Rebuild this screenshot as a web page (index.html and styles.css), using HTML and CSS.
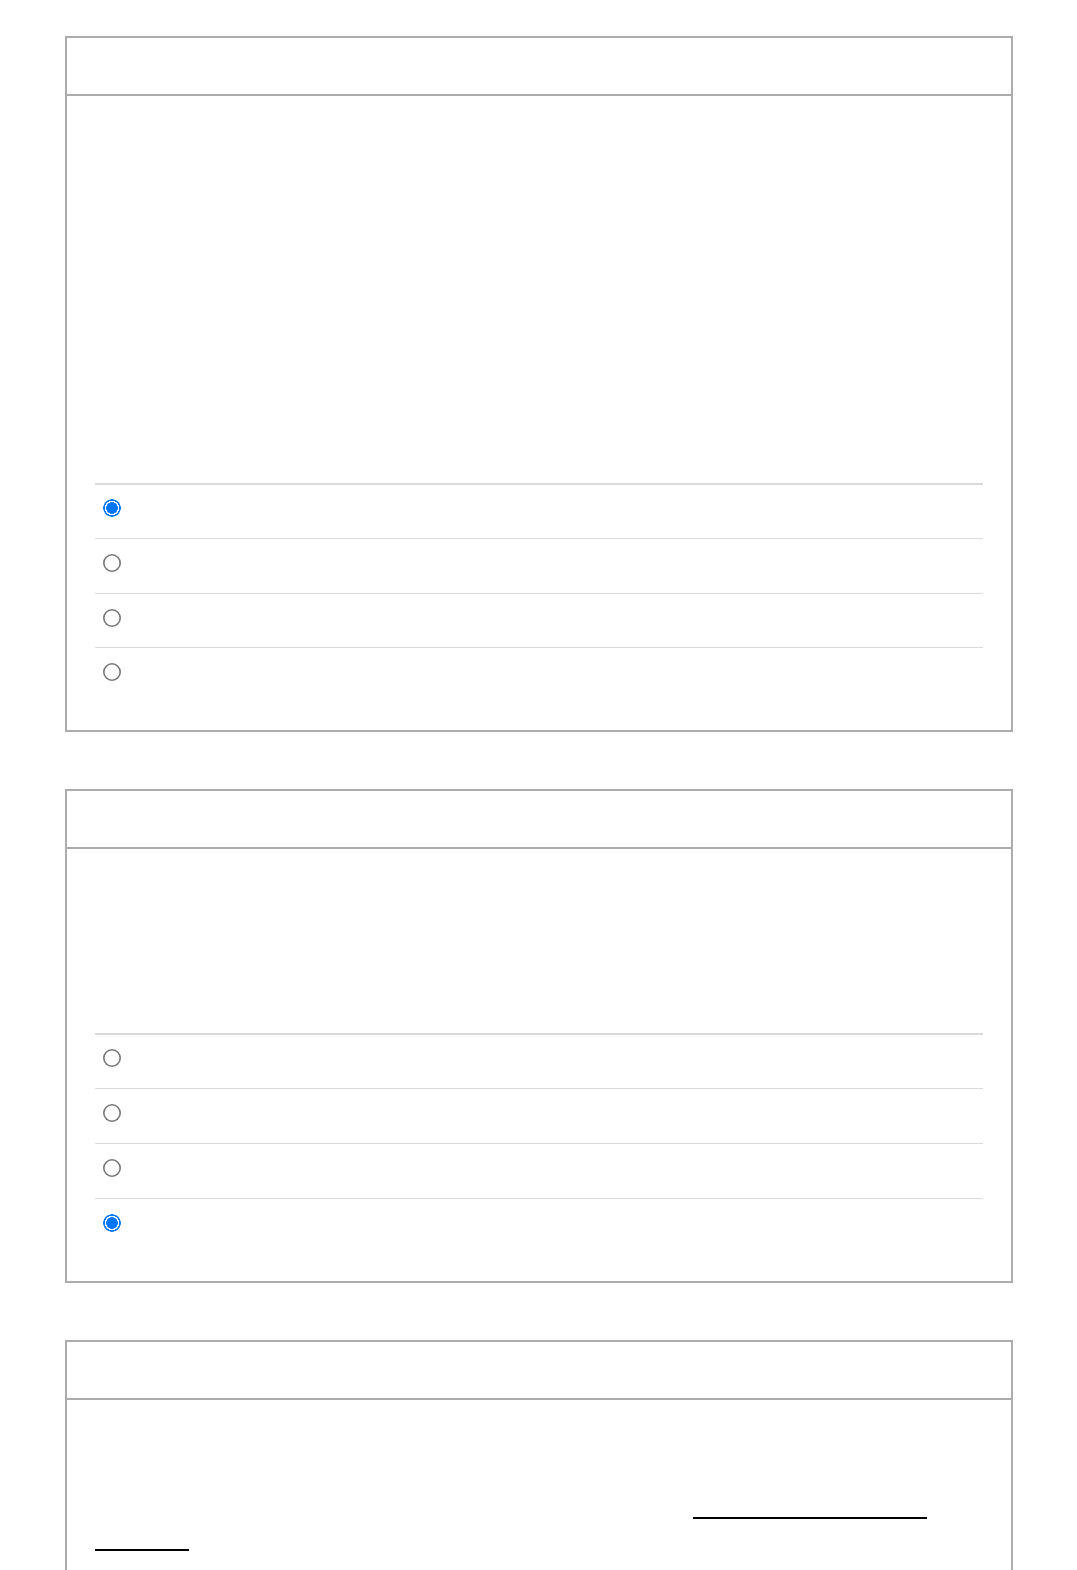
FILE: index.html
```html
<!DOCTYPE html>
<html lang="en">
<head>
<meta charset="utf-8">
<title>Options</title>
<link rel="stylesheet" href="styles.css">
</head>
<body>
<main class="page">
  <section class="card">
    <header class="card-head"></header>
    <div class="card-body">
      <div class="blank blank-lg"></div>
      <ul class="choices">
        <li class="choice"><input type="radio" name="q1" checked aria-label="option 1"></li>
        <li class="choice"><input type="radio" name="q1" aria-label="option 2"></li>
        <li class="choice"><input type="radio" name="q1" aria-label="option 3"></li>
        <li class="choice"><input type="radio" name="q1" aria-label="option 4"></li>
      </ul>
    </div>
  </section>

  <section class="card">
    <header class="card-head"></header>
    <div class="card-body">
      <div class="blank blank-md"></div>
      <ul class="choices">
        <li class="choice"><input type="radio" name="q2" aria-label="option 1"></li>
        <li class="choice"><input type="radio" name="q2" aria-label="option 2"></li>
        <li class="choice"><input type="radio" name="q2" aria-label="option 3"></li>
        <li class="choice"><input type="radio" name="q2" checked aria-label="option 4"></li>
      </ul>
    </div>
  </section>

  <section class="card">
    <header class="card-head"></header>
    <div class="card-body">
      <div class="blank blank-sm"></div>
      <div class="link-line first"><span class="uline uline-a"></span></div>
      <div class="link-line"><span class="uline uline-b"></span></div>
    </div>
  </section>
</main>
</body>
</html>
```

FILE: styles.css
```css
html, body {
  margin: 0;
  padding: 0;
  background: #ffffff;
  font-family: "Liberation Sans", Arial, sans-serif;
}

.page {
  padding: 36px 64px 0 65px;
  display: flex;
  flex-direction: column;
  gap: 57px;
}

.card {
  border: 2px solid #acacac;
  background: #ffffff;
}

.card-head {
  height: 56px;
  border-bottom: 2px solid #acacac;
}

.card-body {
  padding: 28px;
}

.blank-lg { height: 359px; }
.blank-md { height: 156px; }
.blank-sm { height: 89px; }

.choices {
  list-style: none;
  margin: 0;
  padding: 0;
}

.choice {
  border-top: 1px solid #dadada;
  height: 53.83px;
  padding: 0 8px;
  box-sizing: content-box;
  display: flex;
  align-items: flex-start;
}

.choices .choice:first-child {
  border-top-width: 2px;
  height: 52.83px;
}

.choice input {
  appearance: none;
  -webkit-appearance: none;
  width: 18px;
  height: 18px;
  margin: 15px 0 0 0;
  border-radius: 50%;
  background: #ffffff;
  box-shadow: inset 0 0 0 1.6px #767676;
}

.choice input:checked {
  box-shadow: none;
  background: radial-gradient(circle closest-side, #0075ff 0 5.6px, #ffffff 6px 7px, #0075ff 7.4px 8.7px, rgba(0,117,255,0) 9px);
}

.choices .choice:first-child input {
  margin-top: 14px;
}

.link-line {
  height: 32px;
  display: flex;
  align-items: flex-start;
}

.link-line.first {
  padding-left: 598px;
}

.uline {
  display: block;
  height: 2px;
  background: #000000;
}

.uline-a { width: 234px; }
.uline-b { width: 94px; }
```
